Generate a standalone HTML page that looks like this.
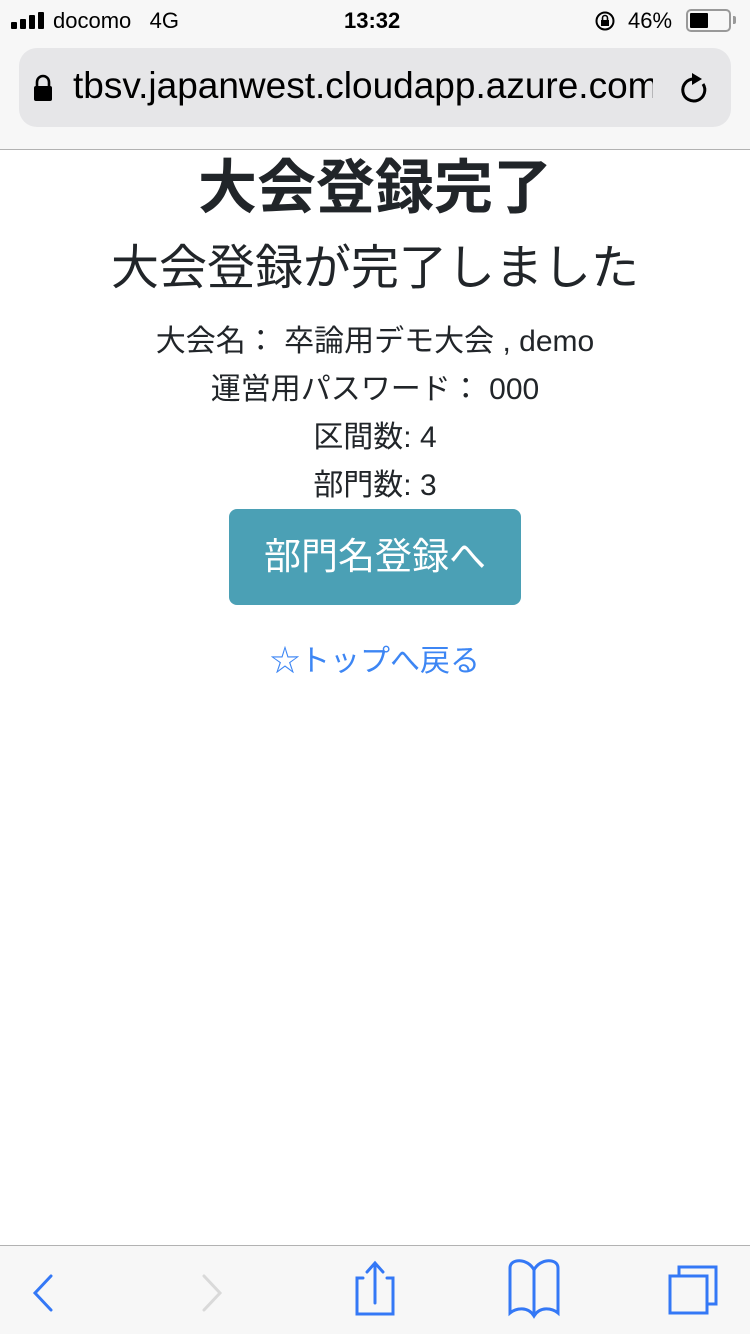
<!DOCTYPE html>
<html><head><meta charset="utf-8"><style>
*{margin:0;padding:0;box-sizing:border-box}
body{width:750px;height:1334px;position:relative;background:#fff;font-family:"Liberation Sans","Noto Sans CJK JP",sans-serif;color:#212529;overflow:hidden}
.top{position:absolute;left:0;top:0;width:750px;height:150px;background:#f7f7f7;border-bottom:1px solid #b2b2b2}
.sb{position:absolute;top:8px;font-size:22px;color:#000}
.url{position:absolute;left:19px;top:48px;width:712px;height:79px;background:#e6e6e8;border-radius:18px}
.url span{position:absolute;left:54px;top:17px;font-size:37px;color:#000;white-space:nowrap;width:580px;overflow:hidden}
.c{position:absolute;left:0;width:750px;text-align:center;white-space:nowrap}
.btn{position:absolute;left:229px;top:509px;width:292px;height:96px;background:#4ba0b5;border-radius:8px;color:#fff;font-size:37px;text-align:center;line-height:96px}
.bot{position:absolute;left:0;top:1245px;width:750px;height:89px;background:#f7f7f7;border-top:1px solid #b2b2b2}
</style></head><body>
<div class="top">
 <svg style="position:absolute;left:11px;top:12px" width="38" height="18"><rect x="0" y="10" width="6" height="7" rx="1"/><rect x="9" y="7" width="6" height="10" rx="1"/><rect x="18" y="3" width="6" height="14" rx="1"/><rect x="27" y="0" width="6" height="17" rx="1"/></svg>
 <div class="sb" style="left:53px">docomo&nbsp;&nbsp;&nbsp;4G</div>
 <div class="sb" style="left:344px;font-weight:bold">13:32</div>
 <svg style="position:absolute;left:594px;top:10px" width="22" height="22"><circle cx="11" cy="11" r="8.5" fill="none" stroke="#000" stroke-width="2"/><rect x="7" y="10" width="8" height="6" fill="#000"/><path d="M8.5 10V8a2.5 2.5 0 0 1 5 0v2" fill="none" stroke="#000" stroke-width="1.6"/></svg>
 <div class="sb" style="left:628px">46%</div>
 <div style="position:absolute;left:686px;top:9px;width:45px;height:23px;border:2px solid #999;border-radius:5px"><div style="position:absolute;left:2px;top:2px;width:18px;height:15px;background:#000;border-radius:1px"></div></div>
 <div style="position:absolute;left:733px;top:16px;width:3px;height:8px;background:#999;border-radius:0 2px 2px 0"></div>
 <div class="url">
  <svg style="position:absolute;left:14px;top:26px" width="20" height="28"><path d="M4 12V8a6 6 0 0 1 12 0v4" fill="none" stroke="#000" stroke-width="2.6"/><rect x="1" y="12" width="18" height="15" rx="2"/></svg>
  <span>tbsv.japanwest.cloudapp.azure.com</span>
  <svg style="position:absolute;left:658px;top:22px" width="34" height="36"><path d="M26 14A11 11 0 1 1 17 9" fill="none" stroke="#000" stroke-width="3"/><path d="M15 3l10 6-10 6z"/></svg>
 </div>
</div>
<div class="c" style="top:150px;font-size:59px;font-weight:bold;line-height:76px">大会登録完了</div>
<div class="c" style="top:236px;font-size:48px;line-height:66px">大会登録が完了しました</div>
<div class="c" style="top:318px;font-size:30px;line-height:48px">大会名： 卒論用デモ大会 , demo<br>運営用パスワード： 000<br>区間数: 4<br>部門数: 3</div>
<div class="btn">部門名登録へ</div>
<div class="c" style="top:642px;font-size:30px;line-height:40px;color:#3d86f4">☆トップへ戻る</div>
<div class="bot">
 <svg width="750" height="89" fill="none" stroke-linecap="round">
  <path d="M51 30L35 47l16 17" stroke="#3478f6" stroke-width="3"/>
  <path d="M204 30l16 17-16 17" stroke="#d9d9d9" stroke-width="3"/>
  <g stroke="#3478f6" stroke-width="3"><path d="M363 32h-6v36h36V32h-6M375 57V18M367 26l8-9 8 9"/>
  <path d="M534 70c-6-10-18-8-24-3V22c0-10 18-10 24 2 6-12 24-12 24-2v45c-6-5-18-7-24 3zM534 24v46"/>
  <rect x="670" y="30" width="37" height="37"/><path d="M679 30v-9h37v37h-9"/></g>
 </svg>
</div>
</body></html>
